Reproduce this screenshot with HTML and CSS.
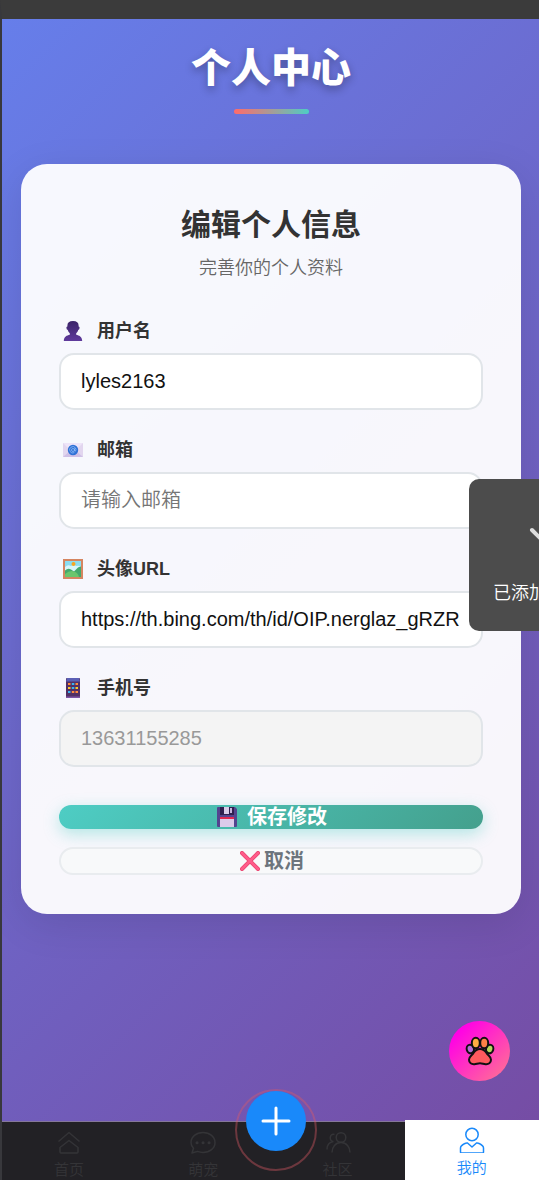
FILE: index.html
```html
<!DOCTYPE html>
<html lang="zh-CN">
<head>
<meta charset="utf-8">
<meta name="viewport" content="width=device-width, initial-scale=1">
<title>个人中心</title>
<link rel="stylesheet" href="styles.css">
</head>
<body>
<div class="page">
  <header class="page-header">
    <h1 class="page-title">个人中心</h1>
    <span class="title-bar"></span>
  </header>

  <main class="content">
    <form class="card">
      <h2 class="card-title">编辑个人信息</h2>
      <p class="card-subtitle">完善你的个人资料</p>

      <div class="fields">
        <div class="field">
          <label class="field-label" for="username">
            <svg class="field-icon" viewBox="0 0 20 20" aria-hidden="true">
              <defs><linearGradient id="bust" x1="0" y1="0" x2="0" y2="1"><stop offset="0" stop-color="#3b2468"/><stop offset="1" stop-color="#5f3a9c"/></linearGradient></defs>
              <path fill="url(#bust)" d="M10 0c3.800 0 5.600 1.500 5.600 4.500v1c.9.1 1.100.8.9 1.700-.2.900-.6 1.600-1.200 1.600-.3 1.500-1.100 2.700-2.100 3.500v1.500c2.800.8 6 1.600 6 6.200H.8c0-4.600 3.200-5.400 6-6.200v-1.500C5.800 11.500 5 10.300 4.700 8.800c-.6 0-1-.7-1.200-1.600-.2-.9 0-1.600.9-1.700v-1C4.400 1.500 6.200 0 10 0z"/>
            </svg>
            <span>用户名</span>
          </label>
          <input class="field-input" id="username" type="text" value="lyles2163">
        </div>

        <div class="field">
          <label class="field-label" for="email">
            <svg class="field-icon" viewBox="0 0 20 20" aria-hidden="true">
              <path fill="#e2d6ef" d="M0 3h20v14H0z"/>
              <path fill="#cfc0e6" d="M0 17 8 10h4l8 7z"/>
              <path fill="#eee4f8" d="M0 3h20l-8 8q-2 1.500-4 0z"/>
              <circle cx="10" cy="10" r="5.200" fill="#2f72d6"/>
              <circle cx="10" cy="10" r="1.500" fill="none" stroke="#8fbaf5" stroke-width=".8"/>
              <path fill="none" stroke="#8fbaf5" stroke-width=".8" d="M11.500 8.500v2q.2 1 1 .6 1-1.600-.1-3.200a3.200 3.200 0 1 0-1 4.700"/>
            </svg>
            <span>邮箱</span>
          </label>
          <input class="field-input" id="email" type="email" placeholder="请输入邮箱">
        </div>

        <div class="field">
          <label class="field-label" for="avatar">
            <svg class="field-icon" viewBox="0 0 20 20" aria-hidden="true">
              <path fill="#d58560" d="M0 0h20v20H0z"/>
              <path fill="#8adcf1" d="M2 2h16v16H2z"/>
              <path fill="#d8f5fb" d="M2 8q3-3 6-1 3-2 5 0 3-1 5 1v5H2z"/>
              <circle cx="10.500" cy="5" r="2" fill="#f5a623"/>
              <path fill="#43a96c" d="M2 11.500q3-3 6-1l3 2 4-4q2-1 3-1V18H2z"/>
              <path fill="#6ac66d" d="M2 15q5-4 9-2.500 4 1 5 5.500H2z"/>
            </svg>
            <span>头像URL</span>
          </label>
          <input class="field-input" id="avatar" type="text" value="https://th.bing.com/th/id/OIP.nerglaz_gRZR">
        </div>

        <div class="field">
          <label class="field-label" for="phone">
            <svg class="field-icon" viewBox="0 0 20 20" aria-hidden="true">
              <rect x="3" width="14" height="20" rx="1" fill="#523064"/>
              <path fill="#5b5fb5" d="M4 0h12l1 3.500H3z"/>
              <path fill="#7e55a6" d="M3 18.500h14V19q0 1-1 1H4q-1 0-1-1z"/>
              <path fill="#ff8b3d" d="M5 5h2.500v2H5zM12.500 5H15v2h-2.500zM8.800 13h2.500v2H8.800zM12.500 13H15v2h-2.500z"/>
              <path fill="#38b6f2" d="M8.800 5h2.500v2H8.800zM5 13h2.500v2H5z"/>
              <path fill="#ffc928" d="M5 9h2.500v2H5zM12.500 9H15v2h-2.500z"/>
              <path fill="#38b6f2" d="M8.800 9h2.500v2H8.800z"/>
            </svg>
            <span>手机号</span>
          </label>
          <input class="field-input" id="phone" type="tel" value="13631155285" disabled>
        </div>
      </div>

      <div class="actions">
        <button class="btn btn-save" type="submit">
          <svg class="btn-icon" viewBox="0 0 20 20" aria-hidden="true">
            <path fill="#54448f" d="M1 0h17l2 2v17q0 1-1 1H1q-1 0-1-1V1q0-1 1-1z"/>
            <path fill="#30204f" d="M3 0h14v8H3z"/>
            <path fill="#d9cce8" d="M7 0h5v7H7z"/>
            <path fill="#c5b6dc" d="M13 1h2v5h-2z"/>
            <path fill="#dccbea" d="M3 11h14v9H3z"/>
            <path fill="#e02950" d="M3 10h14v2H3z"/>
          </svg>
          <span>保存修改</span>
        </button>
        <button class="btn btn-cancel" type="button">
          <svg class="btn-icon" viewBox="0 0 20 20" aria-hidden="true">
            <path stroke="#e8436e" stroke-width="4" stroke-linecap="round" d="m2 2 16 16M18 2 2 18"/>
            <path stroke="#ff5c8a" stroke-width="2.500" stroke-linecap="round" d="m2 2 16 16M18 2 2 18"/>
          </svg>
          <span>取消</span>
        </button>
      </div>
    </form>
  </main>

  <nav class="tabbar">
    <a class="tab" href="#home">
      <svg class="tab-icon" viewBox="0 0 26 26" aria-hidden="true"><path d="M2.500 12.500 13 3.500l10.500 9M13 11.500l-9 7v4.500q0 1 1 1h16q1 0 1-1v-4.500z"/></svg>
      <span>首页</span>
    </a>
    <a class="tab" href="#pets">
      <svg class="tab-icon" viewBox="0 0 26 26" aria-hidden="true"><path d="M13 3.500c6.800 0 12 4.200 12 10s-5.200 10-12 10c-2 0-3.800-.4-5.400-1.100L2 24l1.500-4.800C1.900 17.700 1 15.700 1 13.500c0-5.800 5.200-10 12-10z"/><path class="dots" d="M7 13.700h.1M13 13.700h.1M19 13.700h.1"/></svg>
      <span>萌宠</span>
    </a>
    <a class="tab" href="#community">
      <svg class="tab-icon" viewBox="0 0 26 26" aria-hidden="true"><circle cx="16" cy="8.500" r="4.800"/><path d="M7 23.500c0-5.500 3.500-10 9-10s9 4.500 9 10M9.500 5.500C4 4 4 13 8.500 12.500M2 20.500c0-4.500 2.500-7.500 6.500-8"/></svg>
      <span>社区</span>
    </a>
    <a class="tab tab-active" href="#mine" aria-current="page">
      <svg class="tab-icon" viewBox="0 0 26 26" aria-hidden="true"><circle cx="13" cy="7.500" r="6.200"/><path d="M8.500 16c-1-.3-1.800 0-2.700.5-2.500 1.200-4.300 2.300-4.300 4.500v4q0 1 1 1h21q1 0 1-1v-4c0-2.200-1.800-3.300-4.300-4.500-.9-.5-1.700-.8-2.700-.5L13 20z"/></svg>
      <span>我的</span>
    </a>
    <span class="add-ring"></span>
    <button class="add-button" type="button" aria-label="发布">
      <svg class="add-icon" viewBox="0 0 30 30" aria-hidden="true"><path d="M15 2v26M2 15h26"/></svg>
    </button>
  </nav>

  <button class="paw-button" type="button" aria-label="宠物">
    <svg class="paw-icon" viewBox="0 0 30 30" aria-hidden="true">
      <g stroke="#111" stroke-width="2">
        <ellipse cx="5.300" cy="13" rx="3.600" ry="4.300" fill="#b66bd6" transform="rotate(-15 5.300 13)"/>
        <ellipse cx="24.700" cy="13" rx="3.600" ry="4.300" fill="#b5d85c" transform="rotate(15 24.700 13)"/>
        <ellipse cx="10.800" cy="7" rx="4" ry="5.200" fill="#ffad42"/>
        <ellipse cx="19.200" cy="7" rx="4" ry="5.200" fill="#ff8147"/>
        <path fill="#ff5a5f" d="M15 13c3 0 5 1.500 6.500 4 1.500 2.500 4.500 3.500 4.500 6.800 0 3.200-2.500 4.700-5.500 4.400-2-.2-3.500-1-5.500-1s-3.500.8-5.500 1c-3 .3-5.500-1.200-5.500-4.400 0-3.300 3-4.300 4.500-6.800C10 14.500 12 13 15 13z"/>
      </g>
    </svg>
  </button>

  <div class="toast" role="status">
    <svg class="toast-icon" viewBox="0 0 40 40" aria-hidden="true"><path d="m3 15 11 11L37 5"/></svg>
    <span>已添加</span>
  </div>
</div>
</body>
</html>
```

FILE: styles.css
```css
* {
  box-sizing: border-box;
}

body {
  margin: 0;
  background: #3b3b3b;
  color: #333;
  font-family: "Liberation Sans", "Noto Sans CJK SC", sans-serif;
  overflow: hidden;
}

h1,
h2,
p {
  margin: 0;
}

.page {
  position: relative;
  display: flex;
  flex-direction: column;
  min-height: 100vh;
  overflow: hidden;
  border-top: 19px solid #3b3b3b;
  border-left: 2px solid #38383c;
  background: linear-gradient(135deg, #667eea 0%, #764ba2 100%);
}

.page-header {
  display: flex;
  flex-direction: column;
  align-items: center;
  gap: 11px;
  padding: 19px 18px 50px 19px;
}

.page-title {
  color: #fff;
  font-size: 40px;
  line-height: 60px;
  font-weight: 900;
  text-shadow: 0 4px 8px rgba(0, 0, 0, 0.3);
}

.title-bar {
  width: 75px;
  height: 5px;
  border-radius: 3px;
  background: linear-gradient(90deg, #ff6b6b, #4ecdc4);
}

.content {
  flex: 1;
  padding: 0 18px 0 19px;
}

.card {
  padding: 39px 38px;
  border-radius: 26px;
  background: rgba(255, 255, 255, 0.95);
  box-shadow: 0 10px 40px rgba(0, 0, 0, 0.1);
}

.card-title {
  font-size: 30px;
  line-height: 44px;
  font-weight: 700;
  text-align: center;
}

.card-subtitle {
  margin-top: 9px;
  color: #666;
  font-size: 18px;
  line-height: 24px;
  font-weight: 350;
  text-align: center;
}

.fields {
  display: flex;
  flex-direction: column;
  gap: 28px;
  margin-top: 39px;
}

.field {
  display: flex;
  flex-direction: column;
  gap: 10px;
}

.field-label {
  display: flex;
  align-items: center;
  gap: 14px;
  padding-left: 4px;
  font-size: 18px;
  line-height: 24px;
  font-weight: 700;
}

.field-icon,
.btn-icon {
  width: 20px;
  height: 20px;
  flex: none;
}

.field-input {
  width: 100%;
  height: 57px;
  padding: 0 20px;
  border: 2px solid #e1e5e9;
  border-radius: 15px;
  background: #fff;
  color: #111;
  font-family: inherit;
  font-size: 20px;
}

.field-input::placeholder {
  color: #757575;
  font-weight: 350;
}

.field-input:disabled {
  background: #f4f4f4;
  color: #999;
}

.actions {
  display: flex;
  flex-direction: column;
  gap: 18px;
  margin-top: 38px;
}

.btn {
  display: flex;
  align-items: center;
  justify-content: center;
  padding: 0;
  border: 0;
  border-radius: 14px;
  font-family: inherit;
  font-size: 20px;
  line-height: 24px;
  font-weight: 700;
}

.btn-save {
  gap: 10px;
  padding-left: 2px;
  background: linear-gradient(135deg, #4ecdc4, #44a08d);
  color: #fff;
  box-shadow: 0 5px 16px rgba(78, 205, 196, 0.4);
}

.btn-cancel {
  gap: 4px;
  padding-left: 2px;
  border: 2px solid #e9ecef;
  background: #f8f9fa;
  color: #6c757d;
}

.tabbar {
  position: relative;
  display: grid;
  grid-template-columns: repeat(4, 1fr);
  height: 59px;
  border-top: 1px solid #85779a;
  background: #222125;
}

.tab {
  display: flex;
  flex-direction: column;
  align-items: center;
  gap: 5px;
  padding-top: 7px;
  color: #343437;
  font-size: 15px;
  line-height: 20px;
  font-weight: 350;
  text-decoration: none;
}

.tab-active {
  margin-top: -2px;
  background: #fff;
  color: #1989fa;
}

.tab-icon {
  width: 26px;
  height: 26px;
  flex: none;
  fill: none;
  stroke: currentColor;
  stroke-width: 1.5;
  stroke-linejoin: round;
}

.tab-icon .dots {
  stroke-width: 3;
  stroke-linecap: round;
}

.add-ring {
  position: absolute;
  top: -33px;
  left: calc(51% - 41px);
  width: 82px;
  height: 82px;
  border: 2px solid rgba(220, 90, 100, 0.4);
  border-radius: 50%;
}

.add-button {
  position: absolute;
  top: -31px;
  left: calc(51% - 30px);
  display: grid;
  place-items: center;
  width: 60px;
  height: 60px;
  padding: 0;
  border: 0;
  border-radius: 50%;
  background: #1989fa;
}

.add-icon {
  width: 30px;
  height: 30px;
  fill: none;
  stroke: #fff;
  stroke-width: 3;
  stroke-linecap: round;
}

.paw-button {
  position: absolute;
  right: 29px;
  bottom: 99px;
  display: grid;
  place-items: center;
  width: 61px;
  height: 60px;
  padding: 0;
  border: 0;
  border-radius: 50%;
  background: linear-gradient(135deg, #ff00e6 15%, #ff6b98 90%);
}

.paw-icon {
  width: 30px;
  height: 30px;
}

.toast {
  position: absolute;
  top: 460px;
  left: 467px;
  display: flex;
  flex-direction: column;
  gap: 26px;
  width: 152px;
  height: 152px;
  padding: 36px 24px 0;
  border-radius: 10px;
  background: #4c4c4c;
  color: #fff;
  font-size: 18px;
  line-height: 24px;
  font-weight: 350;
  white-space: nowrap;
}

.toast-icon {
  width: 40px;
  height: 40px;
  margin-left: 36px;
  fill: none;
  stroke: #ddd;
  stroke-width: 4;
  stroke-linecap: round;
}
```
